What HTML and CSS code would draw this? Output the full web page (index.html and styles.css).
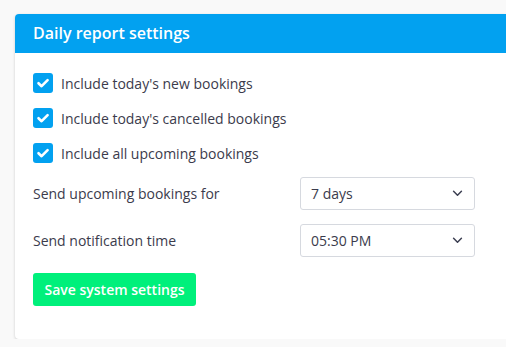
FILE: index.html
```html
<!DOCTYPE html>
<html>
<head>
<meta charset="utf-8">
<link rel="stylesheet" href="styles.css">
</head>
<body>
<div class="card">
  <div class="card-header">Daily report settings</div>
  <div class="card-body">
    <label class="check"><span class="box"><svg viewBox="0 0 20 20" width="20" height="20"><path d="M5.5 10.2 L8.6 13.2 L14.6 7.2" fill="none" stroke="#fff" stroke-width="2.6" stroke-linecap="round" stroke-linejoin="round"/></svg></span>Include today's new bookings</label>
    <label class="check"><span class="box"><svg viewBox="0 0 20 20" width="20" height="20"><path d="M5.5 10.2 L8.6 13.2 L14.6 7.2" fill="none" stroke="#fff" stroke-width="2.6" stroke-linecap="round" stroke-linejoin="round"/></svg></span>Include today's cancelled bookings</label>
    <label class="check"><span class="box"><svg viewBox="0 0 20 20" width="20" height="20"><path d="M5.5 10.2 L8.6 13.2 L14.6 7.2" fill="none" stroke="#fff" stroke-width="2.6" stroke-linecap="round" stroke-linejoin="round"/></svg></span>Include all upcoming bookings</label>
    <div class="field">
      <span class="label">Send upcoming bookings for</span>
      <div class="select"><span>7 days</span><svg viewBox="0 0 12 8" width="11" height="7"><path d="M1.5 1.5 L6 6 L10.5 1.5" fill="none" stroke="#3c3f52" stroke-width="1.7" stroke-linecap="round" stroke-linejoin="round"/></svg></div>
    </div>
    <div class="field">
      <span class="label">Send notification time</span>
      <div class="select"><span>05:30 PM</span><svg viewBox="0 0 12 8" width="11" height="7"><path d="M1.5 1.5 L6 6 L10.5 1.5" fill="none" stroke="#3c3f52" stroke-width="1.7" stroke-linecap="round" stroke-linejoin="round"/></svg></div>
    </div>
    <button class="btn">Save system settings</button>
  </div>
</div>
</body>
</html>
```
FILE: styles.css
```css
html, body {
  margin: 0;
  padding: 0;
  background: #f9f9f9;
  overflow: hidden;
  font-family: "Open Sans", sans-serif;
}
.card {
  margin: 14px 0 0 15px;
  width: 491px;
  background: #fff;
  border-radius: 4px 0 0 4px;
  box-shadow: 0 1px 3px rgba(0,0,0,0.18);
  overflow: hidden;
}
.card-header {
  height: 39px;
  background: #02a1f0;
  color: #fff;
  font-size: 16px;
  font-weight: 600;
  line-height: 39px;
  padding-left: 18px;
}
.card-body {
  padding: 20px 18px 33px;
  display: flex;
  flex-direction: column;
  align-items: flex-start;
}
.check {
  display: flex;
  align-items: center;
  height: 20px;
  font-size: 14px;
  color: #3b3b4c;
  margin-bottom: 15px;
}
.check:nth-of-type(3) { margin-bottom: 14px; }
.box {
  width: 20px;
  height: 20px;
  border-radius: 3px;
  background: #02a1f0;
  margin-right: 8px;
  display: flex;
}
.field {
  display: grid;
  grid-template-columns: 267px 175px;
  align-items: center;
  margin-bottom: 14px;
}
.field + .field { margin-bottom: 16px; }
.label {
  font-size: 14px;
  color: #3b3b4c;
}
.select {
  height: 33px;
  box-sizing: border-box;
  border: 1px solid #d6d9df;
  border-radius: 3px;
  display: flex;
  align-items: center;
  justify-content: space-between;
  padding: 0 11px 0 10px;
  font-size: 14px;
  color: #3b3b4c;
}
.btn {
  height: 33px;
  border: none;
  border-radius: 3px;
  background: #00f07b;
  color: #fff;
  font-family: "Open Sans", sans-serif;
  font-size: 14px;
  font-weight: 600;
  padding: 0 11px;
  width: 163px;
}
```
